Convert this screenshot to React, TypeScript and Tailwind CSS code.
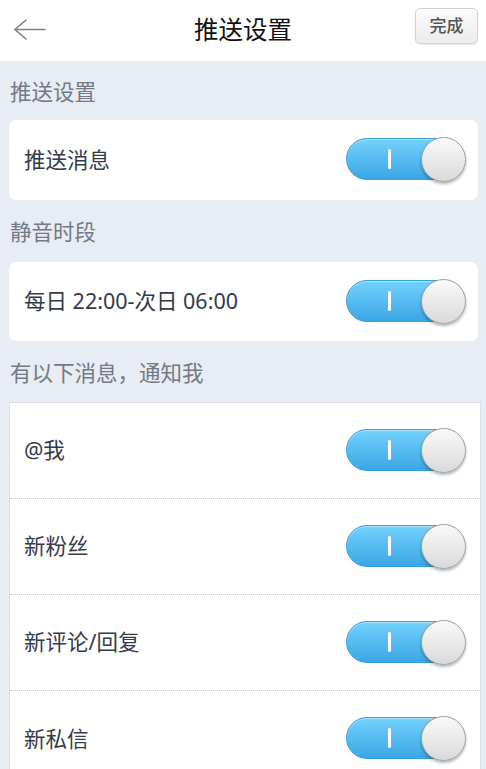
import React from "react";

const font = { fontFamily: "'Noto Sans', 'Noto Sans CJK SC', sans-serif" };

function Toggle() {
  return (
    <div className="relative h-[44px] w-[120px] shrink-0">
      <div className="absolute left-0 top-0 h-[42px] w-[118px] rounded-full border border-[#3b9fd8] bg-gradient-to-b from-[#72d2fd] to-[#3aa6e6] shadow-[inset_0_1px_1px_rgba(255,255,255,0.4)]" />
      <div className="absolute left-[42px] top-[11px] h-[20px] w-[3px] rounded-sm bg-white" />
      <div className="absolute left-[75px] top-[-1px] h-[45px] w-[45px] rounded-full border border-[#9a9ea3] bg-gradient-to-b from-[#fafafa] to-[#d9dadc] shadow-[0_2px_3px_rgba(0,0,0,0.3)]" />
    </div>
  );
}

function SectionLabel({ children, h }: { children: React.ReactNode; h: string }) {
  return (
    <div className={`flex items-center pl-[10px] pt-[3px] text-[21.5px] text-[#737985] ${h}`}>
      {children}
    </div>
  );
}

function ListRow({ label, last }: { label: string; last?: boolean }) {
  return (
    <div
      className={`flex h-[96px] items-center justify-between pl-[14px] pr-[14px] ${
        last ? "" : "border-b border-dotted border-[#c5c9cf]"
      }`}
    >
      <span className="text-[21.5px] text-[#343b4a]">{label}</span>
      <Toggle />
    </div>
  );
}

export default function App() {
  return (
    <div className="h-[769px] w-[486px] overflow-hidden bg-[#e8ecf3]" style={font}>
      {/* Header */}
      <div className="relative flex h-[61px] items-center justify-center bg-white">
        <svg
          className="absolute left-[13px] top-[18px]"
          width="34"
          height="24"
          viewBox="0 0 34 24"
          fill="none"
          stroke="#7a7f89"
          strokeWidth="1.6"
          strokeLinecap="round"
          strokeLinejoin="round"
        >
          <path d="M32 11.5H2" />
          <path d="M13 2L2 11.5L13 21" />
        </svg>
        <span className="text-[24.5px] text-[#111]">推送设置</span>
        <div className="absolute left-[415px] top-[8px] flex h-[36px] w-[63px] items-center justify-center rounded-[5px] border border-[#cfd1d4] bg-gradient-to-b from-[#fbfbfb] to-[#ececec] text-[17px] font-medium text-[#555] shadow-[0_1px_1px_rgba(0,0,0,0.08)]">
          完成
        </div>
      </div>

      <SectionLabel h="h-[59px]">推送设置</SectionLabel>
      <div className="ml-[9px] flex h-[80px] w-[469px] items-center justify-between rounded-[7px] bg-white pl-[15px] pr-[12px]">
        <span className="text-[21.5px] text-[#343b4a]">推送消息</span>
        <Toggle />
      </div>

      <SectionLabel h="h-[62px]">静音时段</SectionLabel>
      <div className="ml-[9px] flex h-[79px] w-[469px] items-center justify-between rounded-[7px] bg-white pl-[15px] pr-[12px]">
        <span className="text-[21.5px] text-[#343b4a]">每日 22:00-次日 06:00</span>
        <Toggle />
      </div>

      <SectionLabel h="h-[61px]">有以下消息，通知我</SectionLabel>
      <div className="ml-[9px] w-[472px] border border-[#dcdfe4] bg-white">
        <ListRow label="@我" />
        <ListRow label="新粉丝" />
        <ListRow label="新评论/回复" />
        <ListRow label="新私信" last />
      </div>
    </div>
  );
}
